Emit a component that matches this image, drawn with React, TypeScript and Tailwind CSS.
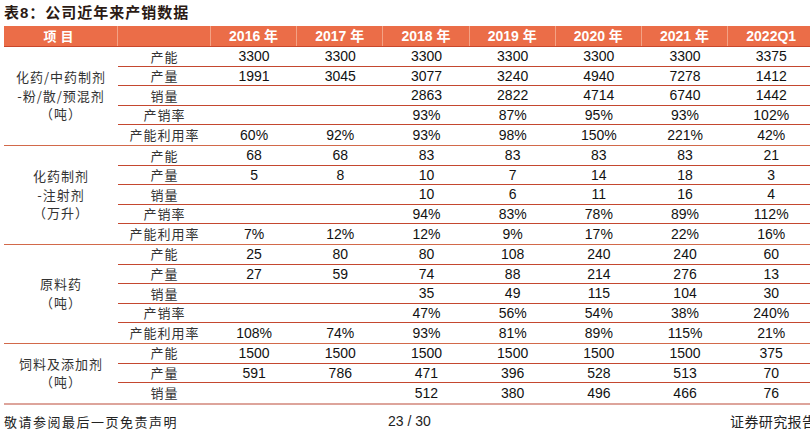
import React from "react";

type Row = { label: string; values: string[] };
type Group = { title: string[]; rows: Row[] };

const years = ["2016 年", "2017 年", "2018 年", "2019 年", "2020 年", "2021 年", "2022Q1"];

const groups: Group[] = [
  {
    title: ["化药/中药制剂", "-粉/散/预混剂", "（吨）"],
    rows: [
      { label: "产能", values: ["3300", "3300", "3300", "3300", "3300", "3300", "3375"] },
      { label: "产量", values: ["1991", "3045", "3077", "3240", "4940", "7278", "1412"] },
      { label: "销量", values: ["", "", "2863", "2822", "4714", "6740", "1442"] },
      { label: "产销率", values: ["", "", "93%", "87%", "95%", "93%", "102%"] },
      { label: "产能利用率", values: ["60%", "92%", "93%", "98%", "150%", "221%", "42%"] },
    ],
  },
  {
    title: ["化药制剂", "-注射剂", "（万升）"],
    rows: [
      { label: "产能", values: ["68", "68", "83", "83", "83", "83", "21"] },
      { label: "产量", values: ["5", "8", "10", "7", "14", "18", "3"] },
      { label: "销量", values: ["", "", "10", "6", "11", "16", "4"] },
      { label: "产销率", values: ["", "", "94%", "83%", "78%", "89%", "112%"] },
      { label: "产能利用率", values: ["7%", "12%", "12%", "9%", "17%", "22%", "16%"] },
    ],
  },
  {
    title: ["原料药", "（吨）"],
    rows: [
      { label: "产能", values: ["25", "80", "80", "108", "240", "240", "60"] },
      { label: "产量", values: ["27", "59", "74", "88", "214", "276", "13"] },
      { label: "销量", values: ["", "", "35", "49", "115", "104", "30"] },
      { label: "产销率", values: ["", "", "47%", "56%", "54%", "38%", "240%"] },
      { label: "产能利用率", values: ["108%", "74%", "93%", "81%", "89%", "115%", "21%"] },
    ],
  },
  {
    title: ["饲料及添加剂", "（吨）"],
    rows: [
      { label: "产能", values: ["1500", "1500", "1500", "1500", "1500", "1500", "375"] },
      { label: "产量", values: ["591", "786", "471", "396", "528", "513", "70"] },
      { label: "销量", values: ["", "", "512", "380", "496", "466", "76"] },
    ],
  },
];

const cjk = "font-['Noto_Sans_CJK_SC',sans-serif]";
const num = "font-['Liberation_Sans','Noto_Sans_CJK_SC',sans-serif]";

export default function App() {
  return (
    <div className="w-[810px] h-[431px] bg-white overflow-hidden">
      <div
        className={`h-[26px] pl-[4px] pt-[3px] text-[15px] leading-[18px] font-bold tracking-[1px] text-[#2b1a14] whitespace-nowrap ${cjk}`}
      >
        表<span className={num}>8</span>：公司近年来产销数据
      </div>

      <div className="ml-[4px] w-[820px]">
        {/* header */}
        <div className="flex h-[21px] bg-[#EB6D48] border-b border-[#C9472B] text-white font-bold">
          <div
            className={`w-[114px] shrink-0 flex items-center justify-center text-[13px] tracking-[4px] border-r border-[#F3A285] ${cjk}`}
          >
            项目
          </div>
          <div className="w-[93px] shrink-0 border-r border-[#F3A285]" />
          {years.map((y, i) => (
            <div
              key={y}
              className={`w-[86.2px] shrink-0 flex items-center justify-center text-[14px] whitespace-nowrap ${num} ${
                i < years.length - 1 ? "border-r border-[#F3A285]" : ""
              }`}
            >
              {y}
            </div>
          ))}
        </div>

        {groups.map((g, gi) => (
          <div
            key={gi}
            className={`flex border-b ${
              gi === groups.length - 1 ? "border-b-2 border-[#DDA49B]" : "border-[#D2694A]"
            }`}
          >
            <div
              className={`w-[114px] shrink-0 flex flex-col items-center justify-center text-[13px] leading-[18.5px] tracking-[1px] text-[#333] ${cjk}`}
            >
              {g.title.map((t) => (
                <div key={t} className="whitespace-nowrap">
                  {t}
                </div>
              ))}
            </div>
            <div className="flex flex-col">
              {g.rows.map((r, ri) => (
                <div
                  key={ri}
                  className={`flex h-[19.6px] items-center ${
                    ri < g.rows.length - 1 ? "border-b border-[#C4472F]" : ""
                  }`}
                >
                  <div
                    className={`w-[93px] shrink-0 text-center text-[13px] tracking-[1px] text-[#333] whitespace-nowrap ${cjk}`}
                  >
                    {r.label}
                  </div>
                  {r.values.map((v, vi) => (
                    <div
                      key={vi}
                      className={`w-[86.2px] shrink-0 text-center text-[14px] leading-[18px] text-[#111] ${num}`}
                    >
                      {v}
                    </div>
                  ))}
                </div>
              ))}
            </div>
          </div>
        ))}
      </div>

      {/* footer */}
      <div className="flex items-center mt-[8px] h-[18px] pl-[4px] w-[900px] whitespace-nowrap text-[#222]">
        <div className={`w-[384px] shrink-0 text-[13px] tracking-[1.5px] ${cjk}`}>敬请参阅最后一页免责声明</div>
        <div className={`w-[44px] shrink-0 text-[14px] ${num}`}>23 / 30</div>
        <div className="w-[298px] shrink-0" />
        <div className={`shrink-0 text-[14px] tracking-[0.4px] ${cjk}`}>证券研究报告</div>
      </div>
    </div>
  );
}
